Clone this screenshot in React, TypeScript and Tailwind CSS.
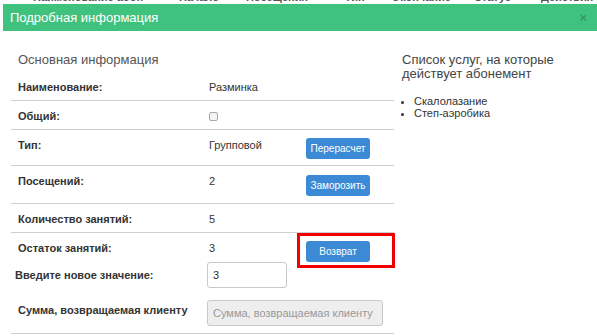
import React from "react";

function Btn({ children }: { children: React.ReactNode }) {
  return (
    <button className="block w-[64px] h-[21px] rounded-[3px] bg-[#3c8ad5] text-white text-[10px] leading-[21px] text-center">
      {children}
    </button>
  );
}

export default function App() {
  const row = "grid grid-cols-[190px_97px_96px] border-b border-[#cfcfcf]";
  const label = "pl-[7px] pt-[8px] text-[11px] leading-[14px] font-bold text-[#333]";
  const val = "pl-[8px] pt-[8px] text-[11px] leading-[14px] text-[#333]";
  return (
    <div className="w-[597px] h-[336px] overflow-hidden bg-white font-['Liberation_Sans',Arial,sans-serif]">
      <div className="h-[4px] overflow-hidden flex items-end text-[#555] text-[11px] leading-[12px] font-bold whitespace-nowrap">
        <span className="ml-[33px] mb-[1px]">Наименование абон</span>
        <span className="ml-[36px] mb-[1px]">Начало</span>
        <span className="ml-[27px] mb-[1px]">Посещения</span>
        <span className="ml-[37px] mb-[1px]">Тип</span>
        <span className="ml-[27px] mb-[1px]">Окончание</span>
        <span className="ml-[23px] mb-[1px]">Статус</span>
        <span className="ml-[30px] mb-[1px]">Действия клиента</span>
      </div>
      <div className="ml-[3px]">
        <div className="h-[27px] bg-[#40c27f] flex items-center justify-between pl-[7px] pr-[10px]">
          <span className="text-white text-[13px]">Подробная информация</span>
          <span className="text-[#2f9d66] text-[13px] font-bold leading-none">×</span>
        </div>
        <div className="flex">
          <div className="w-[391px] pl-[8px] pt-[21px]">
            <div className="pl-[7px] text-[13px] leading-[15px] text-[#555] mb-[5px]">Основная информация</div>
            <div className={row}>
              <div className={label + " pb-[6px]"}>Наименование:</div>
              <div className={val}>Разминка</div>
              <div />
            </div>
            <div className={row}>
              <div className={label + " pb-[6px]"}>Общий:</div>
              <div className="pl-[8px] pt-[11px]">
                <div className="w-[9px] h-[9px] border border-[#a9a9a9] rounded-[2px] bg-[#f4f4f4]" />
              </div>
              <div />
            </div>
            <div className={row}>
              <div className={label}>Тип:</div>
              <div className={val}>Групповой</div>
              <div className="pl-[8px] pt-[8px] pb-[6px]"><Btn>Перерасчет</Btn></div>
            </div>
            <div className={row}>
              <div className={label}>Посещений:</div>
              <div className={val}>2</div>
              <div className="pl-[8px] pt-[9px] pb-[7px]"><Btn>Заморозить</Btn></div>
            </div>
            <div className={row}>
              <div className={label + " pb-[6px]"}>Количество занятий:</div>
              <div className={val}>5</div>
              <div />
            </div>
            <div className="border-b border-[#cfcfcf] pb-[7px]">
              <div className="grid grid-cols-[190px_97px_96px]">
                <div className={label}>Остаток занятий:</div>
                <div className={val}>3</div>
                <div className="relative pl-[8px] pt-[8px]">
                  <Btn>Возврат</Btn>
                  <div className="absolute left-[-1px] top-[0px] w-[98px] h-[35px] border-[3px] border-[#f00000]" />
                </div>
              </div>
              <div className="grid grid-cols-[196px_1fr] items-center">
                <div className="pl-[4px] text-[11px] font-bold text-[#333]">Введите новое значение:</div>
                <div className="w-[80px] h-[26px] border border-[#c8c8c8] rounded-[3px] pl-[5px] text-[11px] leading-[24px] text-[#333]">3</div>
              </div>
              <div className="grid grid-cols-[196px_1fr] mt-[12px]">
                <div className="pl-[7px] pt-[3px] text-[11px] leading-[14px] font-bold text-[#333]">Сумма, возвращаемая клиенту</div>
                <div className="w-[176px] h-[26px] border border-[#c8c8c8] rounded-[3px] bg-[#eeeeee] pl-[5px] text-[11px] leading-[24px] text-[#999]">
                  Сумма, возвращаемая клиенту
                </div>
              </div>
            </div>
          </div>
          <div className="pl-[8px] pt-[22px]">
            <div className="text-[13px] leading-[14px] text-[#444] w-[170px]">
              Список услуг, на которые действует абонемент
            </div>
            <ul className="list-disc pl-[12px] mt-[14px] text-[11px] leading-[12px] text-[#333]">
              <li>Скалолазание</li>
              <li>Степ-аэробика</li>
            </ul>
          </div>
        </div>
      </div>
    </div>
  );
}
